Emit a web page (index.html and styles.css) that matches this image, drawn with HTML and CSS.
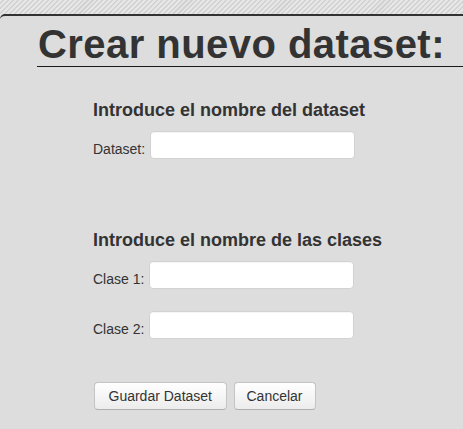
FILE: index.html
```html
<!DOCTYPE html>
<html lang="es">
<head>
<meta charset="utf-8">
<title>Crear nuevo dataset</title>
<link rel="stylesheet" href="styles.css">
</head>
<body>
<main class="panel">
  <h1 class="title">Crear nuevo dataset:</h1>
  <form class="form">
    <section class="section">
      <h3 class="section-title">Introduce el nombre del dataset</h3>
      <div class="row">
        <label class="label" for="ds">Dataset:</label>
        <input class="field" id="ds" type="text">
      </div>
    </section>
    <section class="section section-classes">
      <h3 class="section-title">Introduce el nombre de las clases</h3>
      <div class="row">
        <label class="label" for="c1">Clase 1:</label>
        <input class="field" id="c1" type="text">
      </div>
      <div class="row row-next">
        <label class="label" for="c2">Clase 2:</label>
        <input class="field" id="c2" type="text">
      </div>
    </section>
    <div class="actions">
      <button class="btn btn-save" type="button">Guardar Dataset</button>
      <button class="btn" type="button">Cancelar</button>
    </div>
  </form>
</main>
</body>
</html>
```

FILE: styles.css
```css
html, body {
  margin: 0;
  padding: 0;
  height: 100%;
}
body {
  background-color: #e2e2e2;
  background-image: repeating-linear-gradient(135deg, #e6e6e6 0px, #e6e6e6 2px, #d2d2d2 2px, #d2d2d2 3.5px);
  font-family: "Liberation Sans", Arial, sans-serif;
  color: #333;
  overflow: hidden;
}
.panel {
  margin-top: 14px;
  border-top: 2px solid #333;
  border-top-left-radius: 5px;
  background: #dddddd;
  min-height: 420px;
  padding-top: 6px;
}
.title {
  margin: 0 0 0 37px;
  padding-left: 1px;
  font-size: 40px;
  line-height: 44px;
  font-weight: bold;
  letter-spacing: 0.45px;
  color: #333;
  border-bottom: 1px solid #1a1a1a;
  white-space: nowrap;
}
.form {
  margin: 33px 0 0 93px;
  display: flex;
  flex-direction: column;
}
.section {
  display: flex;
  flex-direction: column;
  align-items: flex-start;
}
.section-classes {
  margin-top: 71px;
}
.section-title {
  margin: 0 0 11px 0;
  font-size: 18px;
  line-height: 20px;
  font-weight: bold;
  color: #333;
}
.row {
  display: flex;
  align-items: flex-end;
  gap: 5px;
}
.row-next {
  margin-top: 22px;
}
.label {
  font-size: 14px;
  line-height: 16px;
  padding-bottom: 2px;
  color: #333;
}
.field {
  box-sizing: border-box;
  width: 205px;
  height: 28px;
  margin: 0;
  padding: 4px 6px;
  background: #fff;
  border: 1px solid #d2d2d2;
  border-radius: 4px;
  box-shadow: inset 0 1px 1px rgba(0,0,0,0.04);
  font-family: inherit;
  font-size: 14px;
  outline: none;
}
.actions {
  margin-top: 43px;
  margin-left: 1px;
  display: flex;
  gap: 7px;
}
.btn {
  box-sizing: border-box;
  height: 28px;
  padding: 0 12px;
  background: linear-gradient(#ffffff, #ececec);
  border: 1px solid #c4c4c4;
  border-bottom-color: #b0b0b0;
  border-radius: 4px;
  font-family: inherit;
  font-size: 14px;
  color: #333;
  cursor: pointer;
}
.btn-save {
  padding: 0 13.5px;
}
```
